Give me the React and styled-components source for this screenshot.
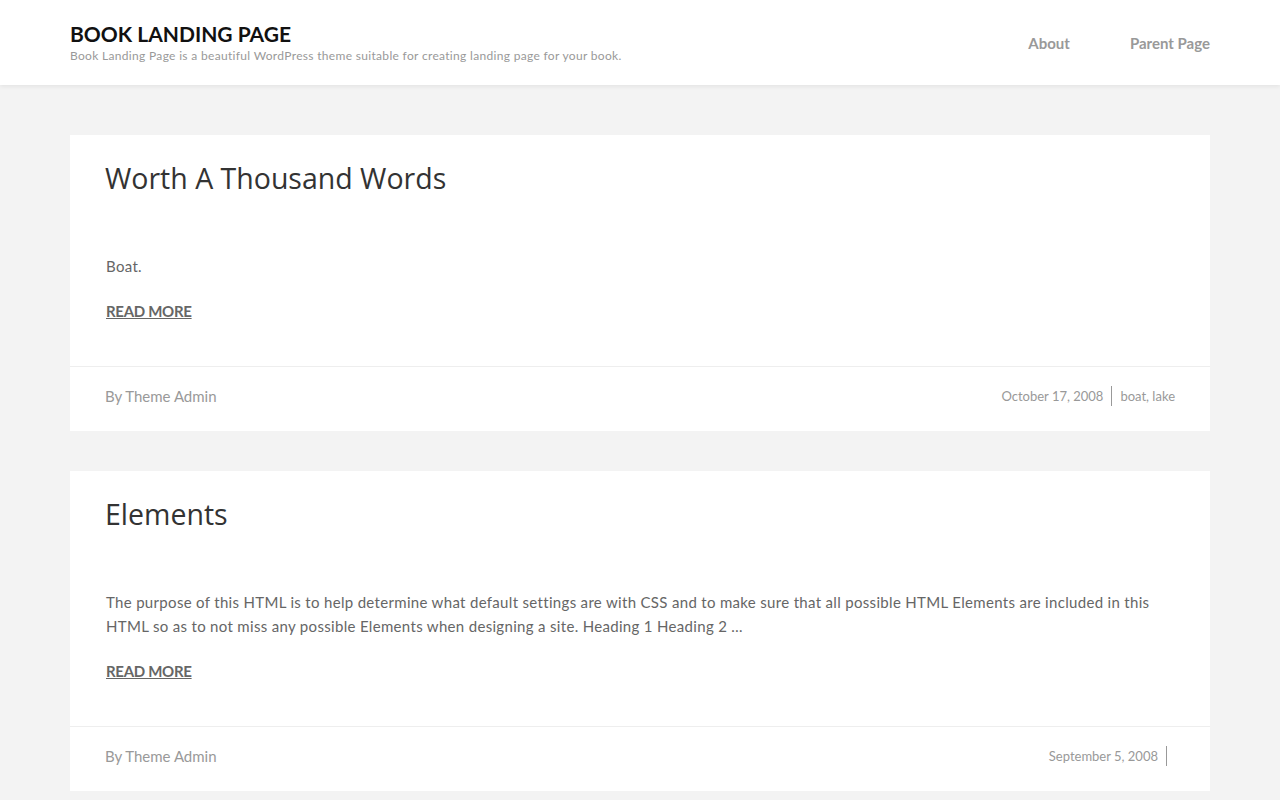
import React from "react";
import styled, { createGlobalStyle } from "styled-components";

const GlobalStyle = createGlobalStyle`
  body {
    margin: 0;
    background: #f3f3f3;
    font-family: Lato, "Noto Sans", sans-serif;
    color: #666;
  }
`;

const Header = styled.header`
  background: #fff;
  height: 85px;
  box-shadow: 0 2px 4px rgba(0, 0, 0, 0.06);
  position: relative;
`;

const HeaderInner = styled.div`
  width: 1140px;
  margin: 0 auto;
  height: 100%;
  display: flex;
  align-items: center;
  justify-content: space-between;
`;

const Branding = styled.div`
  display: flex;
  flex-direction: column;
  padding-bottom: 2px;
`;

const SiteTitle = styled.a`
  font-size: 21px;
  font-weight: 700;
  color: #111;
  text-decoration: none;
  line-height: 28px;
`;

const Tagline = styled.p`
  margin: 0;
  font-size: 12px;
  letter-spacing: 0.32px;
  color: #999;
  line-height: 16px;
`;

const Nav = styled.nav`
  display: flex;
  gap: 60px;
`;

const NavLink = styled.a`
  font-size: 15px;
  font-weight: 700;
  color: #999;
  text-decoration: none;
`;

const Main = styled.main`
  width: 1140px;
  margin: 50px auto 0;
  display: flex;
  flex-direction: column;
  gap: 40px;
`;

const Card = styled.article`
  background: #fff;
`;

const CardBody = styled.div`
  padding: 22px 35px 43px;
`;

const Title = styled.h2`
  margin: 0;
  font-family: "Open Sans", sans-serif;
  font-weight: 400;
  font-size: 28.5px;
  line-height: 42px;
  color: #333;
`;

const Excerpt = styled.p`
  margin: 55px 0 0 1px;
  font-size: 15px;
  letter-spacing: 0.32px;
  line-height: 24px;
  color: #666;
`;

const ReadMore = styled.a`
  display: inline-block;
  margin: 21px 0 0 1px;
  font-size: 15px;
  font-weight: 700;
  letter-spacing: -0.3px;
  color: #666;
  text-decoration: underline;
  line-height: 24px;
`;

const CardFooter = styled.footer`
  border-top: 1px solid #eee;
  height: 65px;
  padding: 0 35px 6px;
  box-sizing: border-box;
  display: flex;
  align-items: center;
  justify-content: space-between;
`;

const Author = styled.span`
  font-size: 15px;
  color: #999;
`;

const Meta = styled.div`
  display: flex;
  align-items: center;
  font-size: 13px;
  color: #999;
`;

const MetaItem = styled.span`
  padding: 0 8px;
  line-height: 20px;
  &:first-child {
    border-right: 1px solid #999;
    padding-left: 0;
  }
  &:last-child {
    padding-right: 0;
  }
`;

const posts = [
  {
    title: "Worth A Thousand Words",
    excerpt: "Boat.",
    date: "October 17, 2008",
    tags: "boat, lake",
  },
  {
    title: "Elements",
    excerpt:
      "The purpose of this HTML is to help determine what default settings are with CSS and to make sure that all possible HTML Elements are included in this HTML so as to not miss any possible Elements when designing a site. Heading 1 Heading 2 …",
    date: "September 5, 2008",
    tags: "",
  },
];

const App = () => {
  return (
    <>
      <GlobalStyle />
      <Header>
        <HeaderInner>
          <Branding>
            <SiteTitle href="#">BOOK LANDING PAGE</SiteTitle>
            <Tagline>
              Book Landing Page is a beautiful WordPress theme suitable for creating landing page for your book.
            </Tagline>
          </Branding>
          <Nav>
            <NavLink href="#">About</NavLink>
            <NavLink href="#">Parent Page</NavLink>
          </Nav>
        </HeaderInner>
      </Header>
      <Main>
        {posts.map((post, index) => (
          <Card key={index}>
            <CardBody>
              <Title>{post.title}</Title>
              <Excerpt>{post.excerpt}</Excerpt>
              <ReadMore href="#">READ MORE</ReadMore>
            </CardBody>
            <CardFooter>
              <Author>By Theme Admin</Author>
              <Meta>
                <MetaItem>{post.date}</MetaItem>
                <MetaItem>{post.tags}</MetaItem>
              </Meta>
            </CardFooter>
          </Card>
        ))}
      </Main>
    </>
  );
};

export default App;
